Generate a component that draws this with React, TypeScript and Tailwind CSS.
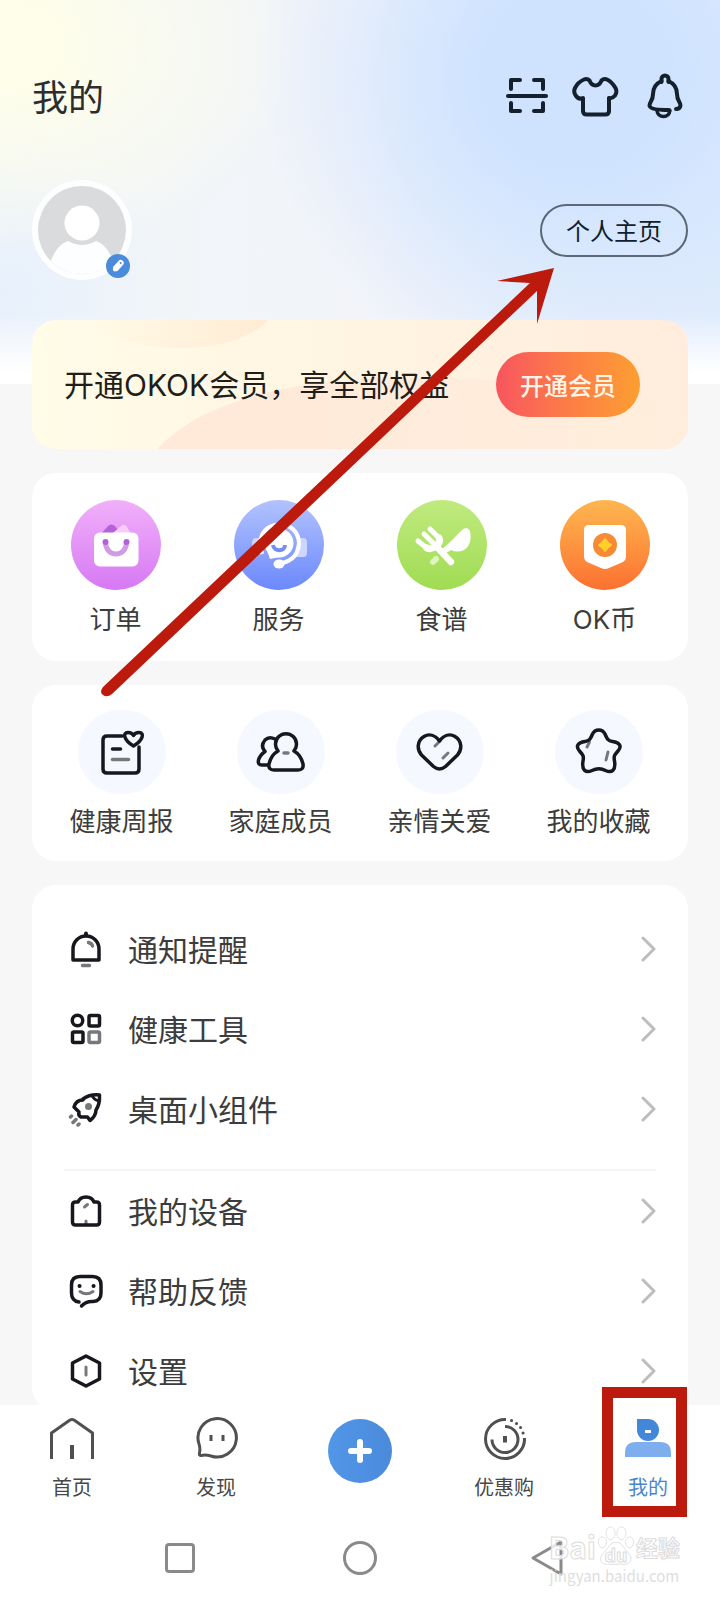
import React from 'react';

interface Entry {
  label: React.ReactNode;
  icon: React.ReactNode;
}

const INK = '#16181d';
const SOFT = '#77787c';

const ScanIcon = () => (
  <svg width="44" height="44" viewBox="0 0 44 44" fill="none" stroke="#14202b" strokeWidth="4" strokeLinecap="round" strokeLinejoin="round">
    <path d="M6 15V6h9M29 6h9v9M6 29v8h9M29 37h9v-8" />
    <path d="M3 22h38" />
  </svg>
);

const ShirtIcon = () => (
  <svg width="48" height="44" viewBox="0 0 48 44" fill="none" stroke="#14202b" strokeWidth="4" strokeLinejoin="round">
    <path d="M13 5.500Q16 4 18.500 6.500C19.500 9 21 11.500 24.500 11.500S29.500 9 30.500 6.500Q33 4 36 5.500Q41 8 44.500 14Q46.500 18 44 21.500Q41 25 38 24V37Q38 40.500 34 40.500H16Q12 40.500 12 37V24Q8 26 5 22Q2 18 4 14Q7 8 13 5.500Z" />
  </svg>
);

const BellIcon = () => (
  <svg width="40" height="48" viewBox="0 0 40 48" fill="none" stroke="#14202b" strokeWidth="4" strokeLinecap="round" strokeLinejoin="round">
    <path d="M16.500 10V7a3.500 3.500 0 0 1 7 0v3" />
    <path d="M16.500 9C10 12 8 17 8 22C8 29 4.500 30 4.500 33.500C4.500 37 13 38 24 38" />
    <path d="M23.500 9C30 12 32 17 32 22C32 29 35.500 30 35.500 33.500Q35 37 31 37" />
    <path d="M12 39Q13 44.500 18.500 44.500T25 38.500" strokeWidth="3.500" />
  </svg>
);

const AvatarIcon = () => (
  <svg width="100" height="100" viewBox="0 0 100 100">
    <defs>
      <clipPath id="face">
        <circle cx="50" cy="50" r="44" />
      </clipPath>
    </defs>
    <circle cx="50" cy="50" r="50" fill="#fdfeff" />
    <g clipPath="url(#face)">
      <rect width="100" height="100" fill="#dadbdc" />
      <path d="M16 90C20 74 27 64 36 61Q50 69 64 61C73 64 80 74 84 90V100H16Z" fill="#fdfeff" />
    </g>
    <circle cx="50" cy="43" r="17.500" fill="#fff" />
  </svg>
);

const PenIcon = () => (
  <svg width="24" height="24" viewBox="0 0 24 24">
    <g transform="rotate(42 12 12)">
      <path d="M12 5Q15 5 15 8V16L13 18.500H11L9 16V8Q9 5 12 5Z" fill="#fff" />
      <circle cx="12" cy="8" r="1" fill="#4a8cdb" />
    </g>
  </svg>
);

const OrderIcon = () => (
  <svg width="90" height="90" viewBox="0 0 90 90">
    <path d="M31 33L37 26Q40 23 44 26L49 33Z" fill="#b561d8" />
    <path d="M42 33L50 26Q53 23 56 27L60 34Z" fill="#f8cdf7" />
    <rect x="23" y="32.500" width="44.500" height="34" rx="6" fill="#fff" />
    <path d="M34.500 42C34.500 58 55.500 58 55.500 42" fill="none" stroke="#d09be6" strokeWidth="5" />
    <circle cx="34.500" cy="42" r="3" fill="#b561d8" />
    <circle cx="55.500" cy="42" r="3" fill="#b561d8" />
  </svg>
);

const ServiceIcon = () => (
  <svg width="90" height="90" viewBox="0 0 90 90" fill="none">
    <path d="M64 38h5q4 0 4 5v10q0 4-4 4h-9Z" fill="#ccd6ff" />
    <path d="M26 38h-4q-4 0-4 5v7q0 4 4 4h6Z" fill="#ccd6ff" />
    <circle cx="45" cy="43" r="14.500" fill="#fff" />
    <path d="M32 48L36 59L46 57Z" fill="#fff" />
    <path d="M28 54Q22 30 41 25C56 22 65 32 65 44C64 56 57 61 48 63" stroke="#fff" strokeWidth="4" />
    <ellipse cx="45" cy="64" rx="5.500" ry="4.500" fill="#fff" />
    <path d="M39 45C40 52 51 52 51 45" stroke="#7290f4" strokeWidth="4" />
  </svg>
);

const RecipeIcon = () => (
  <svg width="90" height="90" viewBox="0 0 90 90" fill="none">
    <path d="M36 62L39 59" stroke="#dcf6bd" strokeWidth="6" strokeLinecap="round" />
    <path d="M51 44L64 31Q70 25 73 31Q76 44 67 50Q60 53 54 50L46 55L43 51Z" fill="#fff" />
    <path d="M33 29L42 38M27 34L36 43M21 41L31 49" stroke="#fff" strokeWidth="5" strokeLinecap="round" />
    <path d="M42 38Q44 42 39 46T30 48" stroke="#fff" strokeWidth="7" strokeLinecap="round" />
    <path d="M39 46L54 62" stroke="#fff" strokeWidth="6.500" strokeLinecap="round" />
  </svg>
);

const CoinIcon = () => (
  <svg width="90" height="90" viewBox="0 0 90 90">
    <path d="M29 25H61Q66 25 66 30V57Q66 60 63 62L49 68Q45 70 41 68L27 62Q24 60 24 57V30Q24 25 29 25Z" fill="#fff" />
    <circle cx="45" cy="45" r="12" fill="#f98a35" />
    <path d="M45 39Q47 43 51 45Q47 47 45 51Q43 47 39 45Q43 43 45 39Z" fill="#ffcf2c" stroke="#ffcf2c" strokeWidth="2" strokeLinejoin="round" />
  </svg>
);

const ReportIcon = () => (
  <svg width="48" height="48" viewBox="0 0 48 48" fill="none" stroke={INK} strokeWidth="3.500" strokeLinecap="round" strokeLinejoin="round">
    <path d="M24 8H9Q5 8 5 12V41Q5 45 9 45H37Q41 45 41 41V19" />
    <path d="M35.500 18C26 12.500 24 4.500 30 4.500Q34 4.500 35.500 7.500Q37 4.500 41 4.500C47 4.500 45 12.500 35.500 18Z" />
    <path d="M14.500 21h8" />
    <path d="M14.500 31.500h16" stroke={SOFT} />
  </svg>
);

const FamilyIcon = () => (
  <svg width="50" height="44" viewBox="0 0 50 44" fill="none" stroke={INK} strokeWidth="3.500" strokeLinecap="round" strokeLinejoin="round">
    <path d="M22 21A10.500 10.500 0 1 1 38 21Q45 25 47 34Q48 40 42 40H18Q12 40 13 34Q15 25 22 21Z" />
    <path d="M19 9Q13 6 9 10Q4 16 9 21.500Q4 25 2.500 30Q1.500 35 6 35H12" />
    <path d="M28 23h4" stroke={SOFT} />
  </svg>
);

const HeartIcon = () => (
  <svg width="50" height="42" viewBox="0 0 50 42" fill="none" stroke={INK} strokeWidth="3.500" strokeLinecap="round" strokeLinejoin="round">
    <path d="M20 15L25 10M28 27L33 22" stroke={SOFT} strokeWidth="3" />
    <path d="M24.500 10C20 4 14 2.500 9 5.500C1.500 10 2 19 6.500 24L18.500 35.500Q24.500 40.500 30.500 35.500L42.500 24C47 19 47.500 10 40 5.500C35 2.500 29 4 24.500 10Z" />
  </svg>
);

const StarIcon = () => (
  <svg width="50" height="50" viewBox="0 0 50 50" fill="none" stroke={INK} strokeWidth="3.500" strokeLinecap="round" strokeLinejoin="round">
    <path d="M15.500 15L13 20M34 25L32 33" stroke={SOFT} strokeWidth="3" />
    <path d="M18.500 7C21 1.500 28.500 1.500 31 7C33 12 34 14 38.500 14.500C46 15.500 48 19.500 44 24C40.500 28 39.500 29 40.500 34C42 43 38 46.500 31.500 43.500C27 41 23 41 18 43.500C11.500 46.500 7.500 43 9 34C10 29 9 28 5.500 24C1.500 19.500 3.500 15.500 11 14.500C15.500 14 16.500 12 18.500 7Z" />
  </svg>
);

const NoticeIcon = () => (
  <svg width="36" height="40" viewBox="0 0 36 40" fill="none" stroke={INK} strokeWidth="3.500" strokeLinecap="round" strokeLinejoin="round">
    <path d="M18 6V4.500" strokeWidth="4" />
    <path d="M5 31V20a13 13 0 0 1 26 0V31Z" />
    <path d="M20.500 13.500Q24 14.500 24.500 17M14.500 36.500h7" stroke={SOFT} />
  </svg>
);

const ToolsIcon = () => (
  <svg width="36" height="36" viewBox="0 0 36 36" fill="none" stroke={INK} strokeWidth="3.500">
    <circle cx="9.500" cy="9.500" r="5.250" />
    <rect x="21" y="4.500" width="10.500" height="10.500" rx="1.500" />
    <rect x="4.500" y="21" width="10.500" height="10.500" rx="1.500" />
    <rect x="21" y="21" width="10.500" height="10.500" rx="1.500" stroke={SOFT} />
  </svg>
);

const RocketIcon = () => (
  <svg width="36" height="36" viewBox="0 0 36 36" fill="none" stroke={INK} strokeWidth="3.500" strokeLinecap="round" strokeLinejoin="round">
    <path d="M15 8Q22 3 31.500 4Q32 13 28 19Q28 25 22 29.500L19.500 26L13 26Q10 25 11 21L6 16Q8 9 15 9Z" />
    <path d="M24 4.500Q26 9 31 10" strokeWidth="3" />
    <circle cx="20.500" cy="15.500" r="3.500" fill={SOFT} stroke="none" />
    <path d="M2.500 26L3.500 25M5 31.500L8 28.500M10 34L11 33" stroke={SOFT} />
  </svg>
);

const DeviceIcon = () => (
  <svg width="36" height="36" viewBox="0 0 36 36" fill="none" stroke={INK} strokeWidth="3.500" strokeLinecap="round" strokeLinejoin="round">
    <path d="M16.500 14L19.500 11.500M18 28V31" stroke={SOFT} strokeWidth="3" />
    <path d="M4.500 12Q4.500 9 7.500 9H10Q12 4 18 4T26 9H28.500Q31.500 9 31.500 12V29Q31.500 32 28.500 32H7.500Q4.500 32 4.500 29Z" />
  </svg>
);

const FeedbackIcon = () => (
  <svg width="36" height="36" viewBox="0 0 36 36" fill="none" stroke={INK} strokeWidth="3.500" strokeLinecap="round" strokeLinejoin="round">
    <path d="M11 29Q3.500 28 3.500 20V12Q3.500 3.500 12 3.500H24.500Q33 3.500 33 12V20Q33 28 25 28.500Q18 28 13.500 33" />
    <path d="M12 18.500Q18.500 23 25 18.500" stroke={SOFT} strokeWidth="3" />
    <path d="M11.500 13h.1M25.500 13h.1" strokeWidth="4" />
  </svg>
);

const SettingsIcon = () => (
  <svg width="36" height="36" viewBox="0 0 36 36" fill="none" stroke={INK} strokeWidth="3.500" strokeLinecap="round" strokeLinejoin="round">
    <path d="M18 3L31.500 10V26L18 33L4.500 26V10Z" />
    <path d="M18 14V22" stroke={SOFT} strokeWidth="3" />
  </svg>
);

const ChevronIcon = () => (
  <svg width="16" height="26" viewBox="0 0 16 26" fill="none" stroke="#bdbdbd" strokeWidth="3" strokeLinecap="round" strokeLinejoin="round">
    <path d="M3 2L14 13L3 24" />
  </svg>
);

const HomeIcon = () => (
  <svg width="44" height="44" viewBox="0 0 44 44" fill="none" stroke="#505050" strokeWidth="3" strokeLinejoin="round">
    <path d="M1.500 42V16L20 3Q22 2 24 3L42.500 16V42" />
    <path d="M22 28V42" strokeWidth="4" />
  </svg>
);

const DiscoverIcon = () => (
  <svg width="44" height="44" viewBox="0 0 44 44" fill="none" stroke="#505050" strokeWidth="3" strokeLinejoin="round">
    <path d="M5 27A19.200 19.200 0 1 1 17 39Q11 37.500 7.500 38.500Q5 39 5.500 36Q6.500 31 5 27Z" />
    <path d="M17 18V24M29 18V24" />
  </svg>
);

const DealsIcon = () => (
  <svg width="44" height="44" viewBox="-1 0 44 44" fill="none" stroke="#505050" strokeWidth="3">
    <path d="M23 2.500A19.500 19.500 0 1 0 41.500 21" />
    <path d="M22 9.500A13 13 0 1 1 9 22.500" />
    <path d="M22 19V25.500" strokeWidth="4" />
    <path d="M28.500 3.500h.1M33.500 6.500h.1M37.500 10.500h.1M40 16h.1" strokeLinecap="round" />
  </svg>
);

const MineIcon = () => (
  <svg width="46" height="44" viewBox="0 0 46 44">
    <path d="M12 2H23A11 11 0 1 1 12 13Z" fill="#4287d9" />
    <path d="M0 40V36Q0 25 11 25H35Q46 25 46 36V40Z" fill="#7eaeee" />
    <rect x="20" y="13" width="6" height="3" fill="#fff" />
  </svg>
);

const services = [
  { id: 'order', label: '订单', icon: <OrderIcon />, tone: 'from-[#f1b0fa] to-[#d678f3]' },
  { id: 'service', label: '服务', icon: <ServiceIcon />, tone: 'from-[#b3c2fd] to-[#6c88fb]' },
  { id: 'recipe', label: '食谱', icon: <RecipeIcon />, tone: 'from-[#c0ea7e] to-[#a0dc52]' },
  {
    id: 'coin',
    label: (
      <span>
        <span className="font-[Inter,sans-serif]">OK</span>币
      </span>
    ),
    icon: <CoinIcon />,
    tone: 'from-[#fdb650] to-[#fb7030]',
  },
];

const shortcuts = [
  { label: '健康周报', icon: <ReportIcon /> },
  { label: '家庭成员', icon: <FamilyIcon /> },
  { label: '亲情关爱', icon: <HeartIcon /> },
  { label: '我的收藏', icon: <StarIcon /> },
];

const tools = [
  { label: '通知提醒', icon: <NoticeIcon /> },
  { label: '健康工具', icon: <ToolsIcon /> },
  { label: '桌面小组件', icon: <RocketIcon /> },
];

const settings = [
  { label: '我的设备', icon: <DeviceIcon /> },
  { label: '帮助反馈', icon: <FeedbackIcon /> },
  { label: '设置', icon: <SettingsIcon /> },
];

const MenuRow: React.FC<Entry> = ({ label, icon }) => (
  <button className="flex h-20 w-full items-center text-[30px] text-[#3c3c3c]">
    <span className="flex w-11 shrink-0 justify-center">{icon}</span>
    <span className="ml-5 flex-1 pb-0.5 text-left">{label}</span>
    <ChevronIcon />
  </button>
);

const Tab: React.FC<Entry & { active?: boolean }> = ({ label, icon, active }) => (
  <button className={`flex flex-col items-center text-xl leading-7 ${active ? 'text-[#4a86cc]' : 'text-[#484848]'}`}>
    <span className="mb-3 flex h-11 items-center">{icon}</span>
    {label}
  </button>
);

const Arrow = () => (
  <svg className="pointer-events-none absolute top-0 left-0" width="720" height="720" viewBox="0 0 720 720">
    <path d="M554 268L497 281L530 283L103 687Q99 692 103 695Q107 698 112 694L537 291L537 324Z" fill="#bb1a0c" />
  </svg>
);

const Watermark = () => (
  <div className="pointer-events-none absolute right-10 bottom-4 flex flex-col items-center">
    <div className="flex items-center text-[30px] leading-9 font-bold text-white/80 [-webkit-text-stroke:1px_#dcdcdc]">
      Bai
      <span className="relative flex h-11 w-10 items-end justify-center text-lg leading-7">
        <svg className="absolute inset-0" width="40" height="44" viewBox="0 0 44 44" fill="#fff" fillOpacity="0.8" stroke="#dedede">
          <ellipse cx="7" cy="18" rx="4.500" ry="6" />
          <ellipse cx="16" cy="8" rx="5" ry="7" />
          <ellipse cx="28" cy="8" rx="5" ry="7" />
          <ellipse cx="37" cy="18" rx="4.500" ry="6" />
          <path d="M22 18C29 18 30 24 35 29C42 36 37 43 31 42H13C5 43 2 36 9 29C14 24 15 18 22 18Z" />
        </svg>
        <span className="relative">du</span>
      </span>
      <span className="text-[22px]">经验</span>
    </div>
    <span className="text-[15px] leading-4 text-[#dedede]">jingyan.baidu.com</span>
  </div>
);

export default function App() {
  return (
    <div className="relative flex h-screen flex-col overflow-hidden bg-[#f7f7f8] font-['Noto_Sans_CJK_SC',sans-serif]">
      <main className="flex min-h-0 flex-1 flex-col overflow-hidden bg-[linear-gradient(to_bottom,transparent_82%,#fff_97%),radial-gradient(ellipse_44%_80%_at_80%_20%,#cfe3ff_30%,transparent_100%),radial-gradient(ellipse_42%_55%_at_0%_12%,#fffeea_15%,transparent_100%),radial-gradient(ellipse_25%_40%_at_0%_76%,#e7f0fc,transparent_100%),linear-gradient(to_right,#f1f6f8,#f2f4f9_50%,#e2edfc)] bg-[length:100%_384px] bg-no-repeat px-8">
        <header className="mt-[68px] flex h-14 shrink-0 items-center justify-between">
          <h1 className="pb-0.5 text-[36px] leading-none text-[#2c2d2c]">我的</h1>
          <div className="flex items-center gap-[22px] pr-[3px]">
            <button aria-label="扫一扫">
              <ScanIcon />
            </button>
            <button aria-label="主题">
              <ShirtIcon />
            </button>
            <button className="ml-1" aria-label="消息">
              <BellIcon />
            </button>
          </div>
        </header>

        <section className="mt-14 flex h-[100px] shrink-0 items-center justify-between">
          <div className="relative">
            <AvatarIcon />
            <span className="absolute right-0.5 bottom-0.5 rounded-full bg-[#4a8cdb]">
              <PenIcon />
            </span>
          </div>
          <button className="h-[53px] rounded-full border-2 border-[#5c6877] px-6 text-2xl text-[#10202d]">个人主页</button>
        </section>

        <section className="relative mt-10 flex h-[129px] shrink-0 items-center justify-between overflow-hidden rounded-3xl bg-linear-to-r from-[#fffce8] via-[#fff4e2] to-[#ffecdc] pr-12 pl-8">
          <svg className="absolute inset-0 h-full w-full" viewBox="0 0 656 129" preserveAspectRatio="none">
            <defs>
              <linearGradient id="wave">
                <stop offset="0" stopColor="#fff0d8" stopOpacity="0" />
                <stop offset="1" stopColor="#ffebd4" />
              </linearGradient>
              <linearGradient id="hill">
                <stop offset="0" stopColor="#ffe9d9" />
                <stop offset="1" stopColor="#ffeedd" />
              </linearGradient>
            </defs>
            <path d="M50 0C90 35 200 40 236 0Z" fill="url(#wave)" />
            <path d="M125 129C180 70 300 50 460 60Q600 70 656 100V129Z" fill="url(#hill)" />
          </svg>
          <p className="relative text-[30px] whitespace-nowrap text-[#201d1a]">
            开通<span className="font-[Inter,sans-serif]">OKOK</span>会员，享全部权益
          </p>
          <button className="relative h-[65px] w-36 rounded-full bg-linear-to-r from-[#f8545e] via-[#fc7d45] to-[#fc9e30] text-2xl font-medium text-[#fff4e8]">
            开通会员
          </button>
        </section>

        <section className="mt-6 grid shrink-0 grid-cols-4 rounded-3xl bg-white px-0.5 pt-[27px] pb-[23px]">
          {services.map((item) => (
            <button key={item.id} className="flex flex-col items-center text-[26px] leading-9 text-[#3c3c3c]">
              <span className={`mb-2.5 rounded-full bg-linear-to-b ${item.tone}`}>{item.icon}</span>
              {item.label}
            </button>
          ))}
        </section>

        <section className="mt-6 grid shrink-0 grid-cols-4 rounded-3xl bg-white px-2.5 pt-[25px] pb-[23px]">
          {shortcuts.map((item) => (
            <button key={item.label} className="flex flex-col items-center text-[26px] leading-9 text-[#3c3c3c]">
              <span className="mb-2 flex h-[84px] w-[88px] items-center justify-center rounded-full bg-[#f6f8ff]">{item.icon}</span>
              {item.label}
            </button>
          ))}
        </section>

        <section className="mt-6 shrink-0 rounded-3xl bg-white px-8 pt-6">
          {tools.map((item) => (
            <MenuRow key={item.label} {...item} />
          ))}
          <hr className="mt-5 border-t-2 border-[#f5f5f5]" />
          {settings.map((item) => (
            <MenuRow key={item.label} {...item} />
          ))}
        </section>
      </main>

      <nav className="shrink-0 bg-white">
        <div className="grid h-[111px] grid-cols-5 pt-3">
          <Tab label="首页" icon={<HomeIcon />} />
          <Tab label="发现" icon={<DiscoverIcon />} />
          <button className="mt-0.5 flex size-16 items-center justify-center justify-self-center rounded-full bg-linear-to-r from-[#5296e8] to-[#4a8adb]" aria-label="添加">
            <svg width="26" height="26" viewBox="0 0 26 26" stroke="#fff" strokeWidth="6" strokeLinecap="round">
              <path d="M13 4V22M4 13H22" />
            </svg>
          </button>
          <Tab label="优惠购" icon={<DealsIcon />} />
          <div className="relative flex justify-center">
            <Tab label="我的" icon={<MineIcon />} active />
            <span className="pointer-events-none absolute -top-[30px] right-[33px] h-[130px] w-[85px] border-[11px] border-[#bb1a0c]"></span>
          </div>
        </div>
        <div className="grid h-[84px] grid-cols-3 items-center justify-items-center px-[90px]">
          <button className="size-[30px] rounded-sm border-3 border-[#8a8a8a]" aria-label="最近任务"></button>
          <button className="size-[34px] rounded-full border-3 border-[#8a8a8a]" aria-label="主屏幕"></button>
          <button aria-label="返回">
            <svg width="46" height="40" viewBox="0 0 46 40" fill="none" stroke="#8a8a8a" strokeWidth="3" strokeLinejoin="round">
              <path d="M16 20L44 4V36Z" />
            </svg>
          </button>
        </div>
      </nav>

      <Arrow />
      <Watermark />
    </div>
  );
}
